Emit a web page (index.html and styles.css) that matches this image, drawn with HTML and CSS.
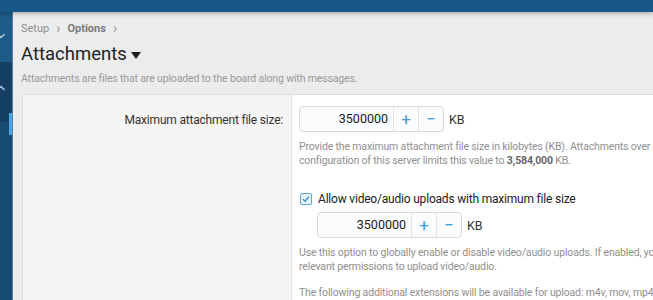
FILE: index.html
```html
<!DOCTYPE html>
<html lang="en">
<head>
    <meta charset="UTF-8">
    <meta name="viewport" content="width=device-width, initial-scale=1.0">
    <title>Attachments | Options</title>
    <link rel="stylesheet" href="styles.css">
</head>
<body>
    <header class="top-bar"></header>
    <div class="layout">
        <nav class="side-nav">
            <div class="nav-section nav-section--top">
                <svg class="nav-toggle" width="8" height="6" viewBox="0 0 8 6">
                    <path d="M0.5 1 L4 4.5 L7.5 1" fill="none" stroke="#b9cfe0" stroke-width="1.3"/>
                </svg>
            </div>
            <div class="nav-section nav-section--open">
                <svg class="nav-toggle nav-toggle--up" width="8" height="6" viewBox="0 0 8 6">
                    <path d="M0.5 5 L4 1.5 L7.5 5" fill="none" stroke="#b9cfe0" stroke-width="1.3"/>
                </svg>
                <span class="nav-active"></span>
            </div>
        </nav>

        <main class="main">
            <div class="breadcrumb">
                <span>Setup</span>
                <span class="crumb-sep">&rsaquo;</span>
                <span class="crumb-current">Options</span>
                <span class="crumb-sep">&rsaquo;</span>
            </div>
            <h1 class="page-title">Attachments <span class="title-caret"></span></h1>
            <p class="page-desc">Attachments are files that are uploaded to the board along with messages.</p>

            <div class="block-container">
                <!-- Tamaño máximo de adjunto -->
                <dl class="form-row">
                    <dt class="form-label">Maximum attachment file size:</dt>
                    <dd class="form-input">
                        <div class="unit-row">
                            <div class="input-group">
                                <span class="input-value">3500000</span>
                                <span class="input-btn">+</span>
                                <span class="input-btn">&minus;</span>
                            </div>
                            <span class="unit">KB</span>
                        </div>
                        <p class="form-explain">Provide the maximum attachment file size in kilobytes (KB). Attachments over the maximum size will be rejected. The configuration of this server limits this value to <b>3,584,000</b> KB.</p>
                    </dd>
                </dl>

                <!-- Subidas de vídeo/audio -->
                <dl class="form-row">
                    <dt class="form-label"></dt>
                    <dd class="form-input">
                        <label class="check-row">
                            <svg class="check-box" width="12" height="12" viewBox="0 0 12 12">
                                <rect x="0.5" y="0.5" width="11" height="11" rx="1.5" fill="#eaf4fb" stroke="#5ba5d9"/>
                                <path d="M3 6.2 L5.1 8.2 L9 3.8" fill="none" stroke="#3b8fcc" stroke-width="1.4"/>
                            </svg>
                            <span>Allow video/audio uploads with maximum file size</span>
                        </label>
                        <div class="unit-row unit-row--nested">
                            <div class="input-group">
                                <span class="input-value">3500000</span>
                                <span class="input-btn">+</span>
                                <span class="input-btn">&minus;</span>
                            </div>
                            <span class="unit">KB</span>
                        </div>
                        <p class="form-explain">Use this option to globally enable or disable video/audio uploads. If enabled, you will also need to ensure users have the relevant permissions to upload video/audio.</p>
                        <p class="form-explain form-explain--gap">The following additional extensions will be available for upload: m4v, mov, mp4, mp4v, mpeg, mpg, ogv, webm, mp3, ogg, oga, opus, wav</p>
                    </dd>
                </dl>
            </div>
        </main>
    </div>
</body>
</html>
```

FILE: styles.css
```css
/* CSS */
body {
    margin: 0;
    height: 300px;
    overflow: hidden;
    background-color: #ececec;
    font-family: Roboto, "Open Sans", sans-serif;
    color: #222;
}

.top-bar {
    height: 12px;
    background-color: #185886;
    box-shadow: 0 2px 4px rgba(0, 0, 0, 0.25);
    position: relative;
    z-index: 2;
}

.layout {
    display: flex;
}

/* Barra lateral */
.side-nav {
    width: 12px;
    flex-shrink: 0;
    height: 288px;
    background-color: #174a71;
    border-right: 1px solid #5d7f99;
    overflow: hidden;
}

.nav-section {
    position: relative;
}

.nav-section--top {
    height: 50px;
    background-color: #1d5b89;
}

.nav-section--open {
    height: 60px;
    background-color: #143f62;
}

.nav-toggle {
    position: absolute;
    left: -3px;
    top: 21px;
}

.nav-toggle--up {
    top: 23px;
}

.nav-active {
    position: absolute;
    right: 0;
    top: 51px;
    width: 3px;
    height: 22px;
    background-color: #47a6ea;
}

/* Contenido principal */
.main {
    flex: 1;
    padding: 0 0 0 8px;
    min-width: 0;
}

.breadcrumb {
    display: flex;
    align-items: center;
    gap: 7px;
    margin-top: 9px;
    font-size: 11px;
    line-height: 15px;
    color: #8e8e8e;
}

.crumb-sep {
    font-size: 14px;
    color: #9a9a9a;
}

.crumb-current {
    font-weight: bold;
    color: #7b7b7b;
}

.page-title {
    margin: 5px 0 0;
    font-size: 18.5px;
    font-weight: normal;
    line-height: 26px;
    color: #1f1f1f;
    display: flex;
    align-items: center;
    gap: 4px;
}

.title-caret {
    width: 0;
    height: 0;
    border-left: 5.5px solid transparent;
    border-right: 5.5px solid transparent;
    border-top: 7px solid #1f1f1f;
    margin-top: 2px;
}

.page-desc {
    margin: 5px 0 0;
    font-size: 10.5px;
    letter-spacing: -0.15px;
    line-height: 14px;
    color: #9a9a9a;
    white-space: nowrap;
}

.block-container {
    margin: 8px 0 0 1px;
    width: 838px;
    border: 1px solid #dcdcdc;
    border-radius: 3px;
    background-color: #fff;
}

.form-row {
    display: grid;
    grid-template-columns: 269px 1fr;
    margin: 0;
}

.form-label {
    background-color: #f5f5f5;
    border-right: 1px solid #e2e2e2;
    padding: 17px 8px 12px 0;
    text-align: right;
    font-size: 12px;
    letter-spacing: -0.2px;
    line-height: 16px;
    color: #333;
}

.form-input {
    margin: 0;
    padding: 11px 8px 12px 7px;
}

.unit-row {
    display: flex;
    align-items: center;
    gap: 5px;
}

.unit-row--nested {
    margin: 5px 0 0 18px;
}

.input-group {
    display: flex;
    height: 26px;
    border: 1px solid #dadada;
    border-radius: 4px;
    background-color: #fafcfe;
    box-sizing: border-box;
}

.input-value {
    width: 88px;
    padding-right: 5px;
    text-align: right;
    font-size: 12.5px;
    line-height: 24px;
    color: #222;
}

.input-btn {
    width: 24px;
    border-left: 1px solid #e4e4e4;
    text-align: center;
    font-size: 17px;
    line-height: 24px;
    color: #3c9ae0;
}

.unit {
    font-size: 12.5px;
    color: #333;
}

.form-explain {
    margin: 8px 0 0;
    font-size: 10.5px;
    letter-spacing: -0.15px;
    line-height: 14px;
    color: #8f8f8f;
}

.form-explain b {
    color: #666;
}

.form-explain--gap {
    margin-top: 12px;
}

.check-row {
    display: flex;
    align-items: center;
    gap: 6px;
    margin-left: 1px;
    font-size: 12px;
    letter-spacing: -0.2px;
    line-height: 16px;
    color: #222;
}
```
